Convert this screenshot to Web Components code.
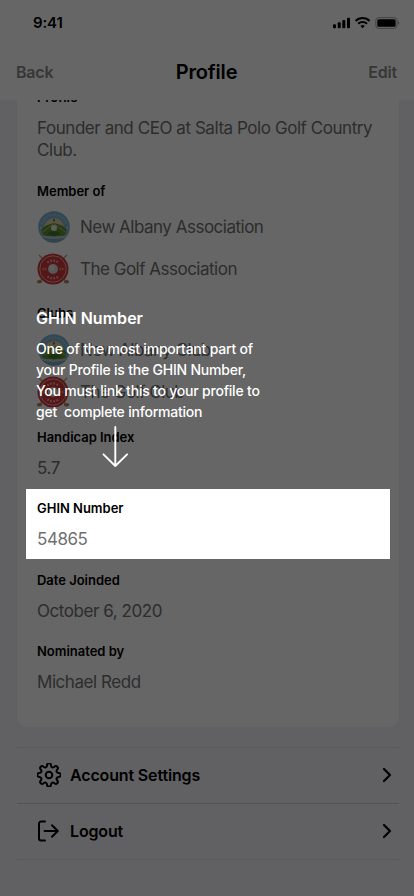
<!DOCTYPE html>
<html lang="en">
<head>
<meta charset="utf-8">
<title>Profile</title>
<style>
  html, body { margin: 0; height: 100%; overflow: hidden; }
  body { font-family: Inter, "Liberation Sans", sans-serif; color: #000; background: #f2f2f7; }
</style>
</head>
<body>
<profile-screen></profile-screen>
<script>
const define = (name, html) => {
  const tpl = document.createElement('template');
  tpl.innerHTML = html;
  customElements.define(name, class extends HTMLElement {
    constructor() {
      super();
      this.attachShadow({ mode: 'open' }).append(tpl.content.cloneNode(true));
    }
  });
};

define('status-bar', `
<style>
  :host { display: flex; justify-content: space-between; align-items: center; height: 46px; padding: 0 14px 0 33px; box-sizing: border-box; background: #fff; }
  .time { font-size: 15px; font-weight: 600; letter-spacing: -.15px; line-height: 18px; }
  svg { display: block; }
</style>
<span class="time">9:41</span>
<svg width="68" height="14" viewBox="332 16 68 14">
  <rect x="333" y="24.3" width="3" height="4" rx="1"/><rect x="337.7" y="22.3" width="3" height="6" rx="1"/><rect x="342.3" y="20" width="3" height="8.3" rx="1"/><rect x="347" y="17.7" width="3" height="10.6" rx="1"/>
  <g fill="none" stroke="#000" stroke-width="2.1"><path d="M355.6 20.9a10 10 0 0 1 14 0"/><path d="M358.2 23.7a6.4 6.4 0 0 1 8.8 0"/></g>
  <path d="M362.6 28.3l-2.2-2.3a3.3 3.3 0 0 1 4.4 0z"/>
  <rect x="375.8" y="17.6" width="21.3" height="10.8" rx="3" fill="none" stroke="#000" stroke-opacity=".35"/>
  <rect x="377.3" y="19.2" width="18.3" height="7.6" rx="1.5"/>
  <path d="M398.2 21.2c1.5.6 1.5 3 0 3.6z" opacity=".4"/>
</svg>`);

define('nav-bar', `
<style>
  :host { display: grid; grid-template-columns: 1fr auto 1fr; align-items: center; height: 54px; padding: 0 17px 2px 16px; box-sizing: border-box; background: #fff; font-weight: 600; }
  ::slotted(*) { font-size: 16px; color: #8b8b8b; letter-spacing: -.2px; }
  ::slotted([slot=right]) { text-align: right; }
  h1 { font-size: 20px; font-weight: 600; letter-spacing: -.15px; margin: 0; line-height: 24px; }
</style>
<slot name="left"></slot><h1><slot></slot></h1><slot name="right"></slot>`);

define('info-field', `
<style>
  :host { display: flex; flex-direction: column; gap: 11px; font-size: 17px; line-height: 22px; color: #707070; letter-spacing: -.44px; }
  :host([highlighted]) { position: relative; z-index: 2; background: #fff; margin: -10px -9px -9px -11px; padding: 10px 9px 9px 11px; }
  .label { font-size: 13px; line-height: 18px; font-weight: 600; color: #000; letter-spacing: -.02px; }
</style>
<div class="label"><slot name="label"></slot></div><div><slot></slot></div>`);

define('member-list', `
<style>
  :host { display: flex; flex-direction: column; gap: 10px; }
</style><slot></slot>`);

define('member-item', `
<style>
  :host { display: flex; align-items: center; gap: 10px; height: 32px; letter-spacing: -.5px; }
</style><slot name="icon"></slot><span><slot></slot></span>`);

define('baseball-emblem', `
<style>:host { display: block; width: 33px; height: 32px; } svg { display: block; }</style>
<svg width="33" height="32" viewBox="0 0 33 32">
  <circle cx="17" cy="16" r="15.8" fill="#7fb2cf"/>
  <path d="M4.7 13a12.8 12.8 0 0 1 24.6 0" fill="none" stroke="#d5e5ea" stroke-width="2.2" stroke-dasharray="1.3 1.5" opacity=".45"/>
  <path d="M7 15.500a10.200 10.200 0 0 1 20 0z" fill="#ddd2a2"/>
  <path d="M4.500 18Q9 13.500 17 12q8 1.500 12.500 6L28 25H6z" fill="#5f9232"/>
  <path d="M6 21l11-8.500L28 21" fill="none" stroke="#bdb878" stroke-width="1"/>
  <path d="M10 22.500q7-5 14 0l-7 3z" fill="#3f7a26"/>
  <path d="M4 24q13 3.500 26 0l-1.500 2.500q-11.500 3-23 0z" fill="#b9c8c6"/>
  <path d="M5.500 26.500q11.500 3 23 0-11.500 10-23 0" fill="#79a9ba"/>
  <circle cx="17" cy="17" r="3" fill="#e8e8de"/>
  <path d="M16 8h2v2.500h-2z" fill="#86754b"/>
  <circle cx="3.800" cy="17" r=".8" fill="#e3edf0"/><circle cx="30.200" cy="17" r=".8" fill="#e3edf0"/>
</svg>`);

define('golf-emblem', `
<style>:host { display: block; width: 33px; height: 32px; } svg { display: block; }</style>
<svg width="33" height="32" viewBox="0 0 33 32">
  <path d="M2 2l28 27M30 2L2 29" stroke="#b39b75" stroke-width="1.2"/>
  <ellipse cx="2.5" cy="28.7" rx="2.7" ry="1.7" fill="#a98757"/><ellipse cx="29.5" cy="28.7" rx="2.7" ry="1.7" fill="#a98757"/>
  <circle cx="16" cy="16" r="15.5" fill="#d3383c"/>
  <circle cx="16" cy="16" r="13.2" fill="none" stroke="#e8b9b2" stroke-width=".9"/>
  <g fill="none" stroke="#f0c5bd" stroke-width="2" stroke-dasharray="1.5 1.6"><path d="M10.5 9.5a8.5 8.5 0 0 1 11 0"/><path d="M10.5 23.5a9 9 0 0 0 11 0"/></g>
  <path d="M5.5 16h4m13 0h4" stroke="#d99a5e" stroke-width="2.6" stroke-dasharray="1.6 .8"/>
  <circle cx="16" cy="16" r="5" fill="#d9d6d2"/><circle cx="15" cy="15" r="2.8" fill="#eceae6"/>
</svg>`);

define('profile-card', `
<style>
  :host { display: flex; flex-direction: column; gap: 20px; margin: -28px 15px 0 17px; padding: 16px 18px 34px 20px; background: #fff; border-radius: 10px; }
</style><slot></slot>`);

define('settings-row', `
<style>
  :host { display: flex; align-items: center; height: 56px; box-sizing: border-box; border-bottom: 1px solid #e1e1e4; padding: 0 6px 2px 20px; gap: 9px; font-size: 16px; font-weight: 600; letter-spacing: -.15px; }
  :host(:first-of-type) { border-bottom-color: #cfcfd3; }
  .text { flex: 1; }
  svg { display: block; }
</style>
<slot name="icon"></slot><span class="text"><slot></slot></span>
<svg width="12" height="16" viewBox="0 0 12 16" fill="none" stroke="#000" stroke-width="2.2" stroke-linecap="round" stroke-linejoin="round"><path d="M3 2l6 6-6 6"/></svg>`);

define('settings-list', `
<style>
  :host { display: block; margin: 20px 15px 0 17px; border-top: 1px solid #e1e1e4; }
</style><slot></slot>`);

define('gear-icon', `
<style>:host { display: block; width: 24px; height: 24px; } svg { display: block; }</style>
<svg width="24" height="24" viewBox="-12 -12 24 24" fill="none" stroke="#000" stroke-width="2" stroke-linejoin="round"><path/><circle r="3.3"/></svg>`);

define('logout-icon', `
<style>:host { display: block; width: 24px; height: 24px; } svg { display: block; }</style>
<svg width="24" height="24" viewBox="0 0 24 24" fill="none" stroke="#000" stroke-width="2" stroke-linecap="round" stroke-linejoin="round"><path d="M8 2.5H4A2 2 0 0 0 2 4.5v15a2 2 0 0 0 2 2h4M7.5 12h13.2M15 6.2l5.8 5.8-5.8 5.8"/></svg>`);

define('coach-mark', `
<style>
  :host { position: absolute; inset: 0; z-index: 1; background: rgba(0,0,0,.6); }
  .tip { position: absolute; left: 36px; top: 307px; color: #fff; }
  h2 { margin: 0 0 9px; font-size: 16px; line-height: 22px; font-weight: 600; letter-spacing: .03px; }
  p { margin: 0; font-size: 14px; line-height: 21px; font-weight: 500; letter-spacing: -.21px; white-space: pre; }
  svg { display: block; margin: 4px 0 0 65px; }
</style>
<div class="tip"><h2><slot name="title"></slot></h2><p><slot></slot></p>
<svg width="29" height="44" viewBox="101 426 29 44" fill="none" stroke="#fff" stroke-width="1.9" stroke-linecap="round" stroke-linejoin="round"><path d="M115.3 427v39M103.5 454.3l11.8 11.7 11.8-11.7"/></svg></div>`);

define('profile-screen', `
<style>
  :host { display: flex; flex-direction: column; position: relative; width: 414px; height: 896px; overflow: hidden; background: #f2f2f7; }
  main { flex: 1; overflow: hidden; }
  .members { margin-top: 1px; }
  .clubs { margin-top: -1px; gap: 12px; }
  .joined { margin-top: 1px; }
</style>
<status-bar></status-bar>
<nav-bar><span slot="left">Back</span>Profile<span slot="right">Edit</span></nav-bar>
<main>
  <profile-card>
    <info-field><span slot="label">Profile</span>Founder and CEO at Salta Polo Golf Country Club.</info-field>
    <info-field class="members"><span slot="label">Member of</span>
      <member-list>
        <member-item><baseball-emblem slot="icon"></baseball-emblem>New Albany Association</member-item>
        <member-item><golf-emblem slot="icon"></golf-emblem>The Golf Association</member-item>
      </member-list></info-field>
    <info-field class="clubs"><span slot="label">Clubs</span>
      <member-list>
        <member-item><baseball-emblem slot="icon"></baseball-emblem>New Albany Club</member-item>
        <member-item><golf-emblem slot="icon"></golf-emblem>The Golf Club</member-item>
      </member-list></info-field>
    <info-field><span slot="label">Handicap Index</span>5.7</info-field>
    <info-field highlighted><span slot="label">GHIN Number</span>54865</info-field>
    <info-field class="joined"><span slot="label">Date Joinded</span>October 6, 2020</info-field>
    <info-field><span slot="label">Nominated by</span>Michael Redd</info-field>
  </profile-card>
  <settings-list>
    <settings-row><gear-icon slot="icon"></gear-icon>Account Settings</settings-row>
    <settings-row><logout-icon slot="icon"></logout-icon>Logout</settings-row>
  </settings-list>
</main>
<coach-mark><span slot="title">GHIN Number</span>One of the most important part of
your Profile is the GHIN Number,
You must link this to your profile to
get  complete information</coach-mark>`);

// Eight rounded teeth around the hub, smoothed through segment midpoints.
const screenRoot = document.querySelector('profile-screen').shadowRoot;
const pts = [];
for (let i = 0; i < 8; i++) {
  for (const [a, r] of [[-14, 8.4], [-9, 11.8], [9, 11.8], [14, 8.4]]) {
    const t = (i * 45 + a - 90) * Math.PI / 180;
    pts.push([r * Math.cos(t), r * Math.sin(t)]);
  }
}
const mid = (p, q) => [(p[0] + q[0]) / 2, (p[1] + q[1]) / 2].map(v => v.toFixed(2)).join(' ');
let d = 'M' + mid(pts[pts.length - 1], pts[0]);
pts.forEach((p, i) => { d += `Q${p[0].toFixed(2)} ${p[1].toFixed(2)} ${mid(p, pts[(i + 1) % pts.length])}`; });
screenRoot.querySelector('gear-icon').shadowRoot.querySelector('path').setAttribute('d', d + 'Z');
</script>
</body>
</html>
